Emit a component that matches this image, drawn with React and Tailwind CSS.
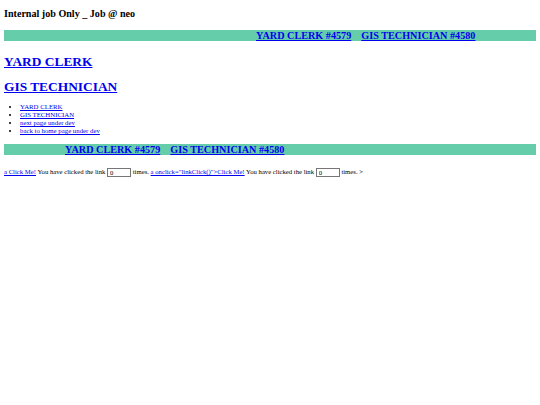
export default function App() {
  const link = 'text-[#0000ee] underline';
  const box =
    "inline-block w-[24px] h-[9px] align-middle border border-[#767676] px-[2px] text-[6.7px] leading-[7px] font-['Liberation_Serif',serif]";

  return (
    <div className="min-h-screen bg-white px-[4px] pt-[8px] text-black font-['Liberation_Serif',serif]">
      <h2 className="text-[10.1px] leading-[12px] font-bold">Internal job Only _ Job @ neo</h2>

      {/* marquee strip */}
      <div className="mt-[10px] h-[11px] bg-[#66cdaa] pl-[252px] whitespace-nowrap overflow-hidden text-[10.2px] leading-[11px] font-bold">
        <a href="#" className={link}>YARD CLERK #4579</a>
        <a href="#" className={`${link} ml-[10px]`}>GIS TECHNICIAN #4580</a>
      </div>

      <h1 className="mt-[13px] text-[13.4px] leading-[15px] font-bold">
        <a href="#" className={link}>YARD CLERK</a>
      </h1>
      <h1 className="mt-[10px] text-[13.4px] leading-[15px] font-bold">
        <a href="#" className={link}>GIS TECHNICIAN</a>
      </h1>

      <ul className="mt-[9px] list-disc pl-[16px] text-[6.8px] leading-[8px]">
        <li><a href="#" className={link}>YARD CLERK</a></li>
        <li><a href="#" className={link}>GIS TECHNICIAN</a></li>
        <li><a href="#" className={link}>next page under dev</a></li>
        <li><a href="#" className={link}>back to home page under dev</a></li>
      </ul>

      <div className="mt-[9px] h-[11px] bg-[#66cdaa] pl-[61px] whitespace-nowrap overflow-hidden text-[10.2px] leading-[11px] font-bold">
        <a href="#" className={link}>YARD CLERK #4579</a>
        <a href="#" className={`${link} ml-[10px]`}>GIS TECHNICIAN #4580</a>
      </div>

      <p className="mt-[12px] text-[6.7px] leading-[10px] whitespace-nowrap">
        <a href="#" className={link}>a Click Me!</a> You have clicked the link{' '}
        <input readOnly value="0" className={box} />{' '}
        times. <a href="#" className={link}>a onclick="linkClick()"&gt;Click Me!</a> You have clicked the link{' '}
        <input readOnly value="0" className={box} />{' '}
        times. &gt;
      </p>
    </div>
  );
}
